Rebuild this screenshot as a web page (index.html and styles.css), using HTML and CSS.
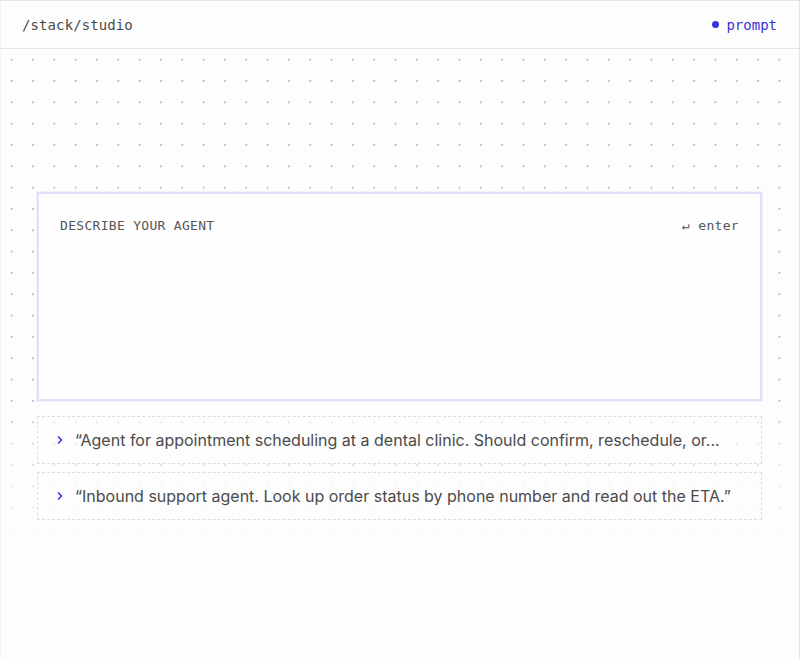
FILE: index.html
```html
<!DOCTYPE html>
<html lang="en">
<head>
<meta charset="utf-8">
<title>/stack/studio</title>
<link rel="stylesheet" href="styles.css">
</head>
<body>
<div class="frame">
  <header class="topbar">
    <span class="path">/stack/studio</span>
    <span class="mode"><span class="mode-dot"></span>prompt</span>
  </header>
  <main class="canvas">
    <section class="prompt-card">
      <div class="prompt-head">
        <span class="prompt-label">DESCRIBE YOUR AGENT</span>
        <span class="prompt-hint">↵ enter</span>
      </div>
    </section>
    <ul class="suggestions">
      <li class="suggestion">
        <svg class="chev" width="6" height="10" viewBox="0 0 6 10"><path d="M1 1.5 L4.5 5 L1 8.5" fill="none" stroke="currentColor" stroke-width="1.5"/></svg>
        <span class="suggestion-text">“Agent for appointment scheduling at a dental clinic. Should confirm, reschedule, or...</span>
      </li>
      <li class="suggestion">
        <svg class="chev" width="6" height="10" viewBox="0 0 6 10"><path d="M1 1.5 L4.5 5 L1 8.5" fill="none" stroke="currentColor" stroke-width="1.5"/></svg>
        <span class="suggestion-text">“Inbound support agent. Look up order status by phone number and read out the ETA.”</span>
      </li>
    </ul>
  </main>
</div>
</body>
</html>
```

FILE: styles.css
```css
* { box-sizing: border-box; }
html, body { margin: 0; padding: 0; background: #fdfdfd; }
body { width: 800px; height: 659px; overflow: hidden; }

.frame {
  width: 800px;
  height: 659px;
  border: 1px solid #e4e4e4;
  border-bottom: none;
  border-left-color: #f3f3f3;
  background: #fdfdfd;
  display: flex;
  flex-direction: column;
}

.topbar {
  height: 48px;
  flex: none;
  display: flex;
  align-items: center;
  justify-content: space-between;
  padding: 0 22px 0 21px;
  border-bottom: 1px solid #e4e4e4;
  font-family: "DejaVu Sans Mono", "Liberation Mono", monospace;
  font-size: 14px;
}
.path { color: #4a4a4a; letter-spacing: 0.1px; }
.mode { color: #3a32d8; display: flex; align-items: center; gap: 7px; }
.mode-dot { width: 7px; height: 7px; border-radius: 50%; background: #3a32d8; }

.canvas {
  flex: 1;
  padding: 143px 37px 0 36px;
  background-color: #fdfdfd;
  background-image:
    linear-gradient(to bottom, rgba(253,253,253,0) 0, rgba(253,253,253,0) 350px, rgba(253,253,253,1) 500px),
    radial-gradient(circle at center, #c4c4c4 0, #c4c4c4 0.9px, rgba(196,196,196,0) 1.3px);
  background-size: 100% 100%, 21.33px 21.33px;
  background-repeat: no-repeat, repeat;
  background-position: 0 0, 0 0;
}

.prompt-card {
  height: 209px;
  background: #fefefe;
  border: 2px solid #e2e0f8;
  box-shadow: 0 0 0 1px #f1f0fc;
  padding: 24px 21px 0 21px;
}
.prompt-head {
  display: flex;
  justify-content: space-between;
  align-items: center;
  font-family: "DejaVu Sans Mono", "Liberation Mono", monospace;
  font-size: 13px;
  letter-spacing: 0.3px;
  color: #555;
}

.suggestions {
  list-style: none;
  margin: 15px 0 0 0;
  padding: 0;
  display: flex;
  flex-direction: column;
  gap: 8px;
}
.suggestion {
  height: 48px;
  display: flex;
  align-items: center;
  gap: 12px;
  padding: 0 16px 0 19px;
  border: 1px dashed #dedede;
  background: rgba(253,253,253,0.55);
  font-family: Inter, "Noto Sans", sans-serif;
  font-size: 16px;
  color: #4b4b4b;
}
.chev { color: #3a32d8; flex: none; }
.suggestion-text {
  white-space: nowrap;
  min-width: 0;
}
```
